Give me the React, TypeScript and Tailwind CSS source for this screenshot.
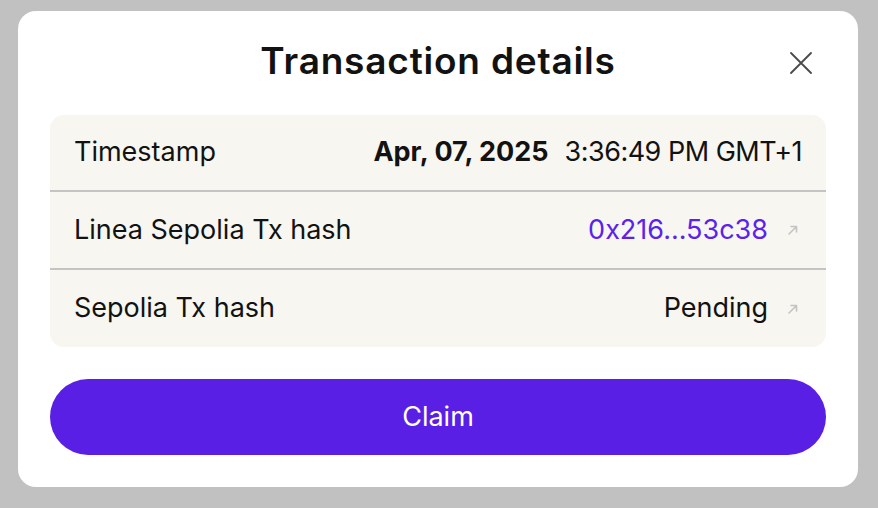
import React from "react";

function ArrowIcon() {
  return (
    <svg width="18" height="18" viewBox="0 0 18 18" fill="none" className="shrink-0">
      <path d="M5 13 L12.5 5.5 M7 5.5 H12.5 V11" stroke="#c4c4c4" strokeWidth="1.6" strokeLinecap="round" strokeLinejoin="round" />
    </svg>
  );
}

export default function App() {
  return (
    <div
      className="w-[878px] h-[508px] bg-[#c1c1c1] pt-[11px] px-[18px] overflow-hidden"
      style={{ fontFamily: "Inter, 'Noto Sans', sans-serif" }}
    >
      <div className="w-[840px] h-[476px] bg-white rounded-[18px] px-8 pt-8 pb-8 flex flex-col">
        <div className="relative flex items-center justify-center h-[40px] -mt-[3px] mb-[4px]">
          <h1 className="text-[37px] font-semibold text-[#121212] tracking-[0.8px] leading-none">
            Transaction details
          </h1>
          <button className="absolute right-[14px] top-[12px] w-[22px] h-[22px] flex items-center justify-center">
            <svg width="22" height="22" viewBox="0 0 22 22" fill="none">
              <path d="M1 1 L21 21 M21 1 L1 21" stroke="#4a4a4a" strokeWidth="1.8" strokeLinecap="round" />
            </svg>
          </button>
        </div>

        <div className="mt-[31px] bg-[#f7f6f1] rounded-[14px] flex flex-col text-[27px] text-[#121212]">
          <div className="h-[77px] flex items-center justify-between px-6 border-b-2 border-[#c4c4c4]">
            <span>Timestamp</span>
            <span className="flex items-center gap-4">
              <span className="font-bold">Apr, 07, 2025</span>
              <span className="tracking-[-0.5px]">3:36:49 PM GMT+1</span>
            </span>
          </div>
          <div className="h-[78px] flex items-center justify-between px-6 border-b-2 border-[#c4c4c4]">
            <span>Linea Sepolia Tx hash</span>
            <span className="flex items-center gap-4">
              <span className="text-[#5b22ec]">0x216...53c38</span>
              <ArrowIcon />
            </span>
          </div>
          <div className="h-[77px] flex items-center justify-between px-6">
            <span>Sepolia Tx hash</span>
            <span className="flex items-center gap-4">
              <span>Pending</span>
              <ArrowIcon />
            </span>
          </div>
        </div>

        <button className="mt-8 h-[76px] w-full rounded-full bg-[#5a1fe5] text-white text-[27px] flex items-center justify-center">
          Claim
        </button>
      </div>
    </div>
  );
}
